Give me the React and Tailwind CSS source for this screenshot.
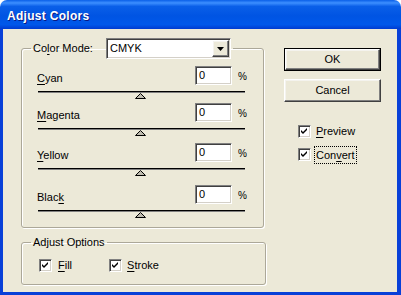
import React from 'react';

const sunken =
    'border border-t-[#808080] border-l-[#808080] border-b-white border-r-white shadow-[inset_1px_1px_0_#404040,inset_-1px_-1px_0_#d4d0c8]';
const raised =
    'border border-t-white border-l-white border-b-[#404040] border-r-[#404040] shadow-[inset_-1px_-1px_0_#808080,inset_1px_1px_0_#f4f3ee]';
const etched = 'border border-[#aca899] rounded-[3px] shadow-[inset_1px_1px_0_#fff,1px_1px_0_#fff]';

const Key = ({ children }) => <span className="underline underline-offset-[2px]">{children}</span>;

const Checkbox = () => (
    <div className={`w-[13px] h-[13px] bg-white flex items-center justify-center ${sunken}`}>
        <svg width="7" height="7" viewBox="0 0 7 7">
            <path d="M0 2 L2 4 L6 0 L6 2 L2 6 L0 4 Z" fill="#000" />
        </svg>
    </div>
);

const ColorRow = ({ label, className }) => (
    <div className={className}>
        <div className="flex items-center h-[19px]">
            <span className="flex-1 -ml-[1px] pt-[5px]">{label}</span>
            <div className={`w-[37px] h-[19px] bg-white pl-[3px] leading-[17px] ${sunken}`}>0</div>
            <span className="ml-[6px] w-[7px] text-[10px] pt-[1px]">%</span>
        </div>
        <div className="mt-[6px] h-[2px] bg-black border-b border-[#808080]" />
        <div className="flex justify-center pr-[2px]">
            <svg width="11" height="6" viewBox="0 0 11 6">
                <path d="M5.5 0.5 L10.5 5.5 L0.5 5.5 Z" fill="#c0bdb0" stroke="#000" strokeWidth="1" />
            </svg>
        </div>
    </div>
);

export default function App() {
    return (
        <div className="w-[401px] h-[295px] flex flex-col font-['Liberation_Sans',Arial,sans-serif] text-[11px] text-black select-none">
            <div className="h-[29px] shrink-0 rounded-t-[7px] bg-[linear-gradient(to_bottom,#0a5fe8_0%,#3d8fff_10%,#0a5fe8_22%,#0054e3_55%,#0058ea_85%,#003bd0_100%)] flex items-center pl-[7px] pt-[3px]">
                <span className="text-white font-bold text-[12px] tracking-[0.3px] [text-shadow:1px_1px_0_#0a1883]">
                    Adjust Colors
                </span>
            </div>
            <div className="flex-1 flex bg-[#ece9d8] border-l-[3px] border-r-[4px] border-b-[3px] border-[#0840d8]">
                <div className="w-[245px] ml-[18px] pt-[9px]">
                    <fieldset className={`w-[243px] pb-[9px] ${etched}`}>
                        <legend className="ml-[9px] px-[2px] flex items-center">
                            <span>
                                Co<Key>l</Key>or Mode:
                            </span>
                            <div className={`ml-[13px] w-[125px] h-[21px] bg-white flex items-center ${sunken}`}>
                                <span className="flex-1 pl-[3px]">CMYK</span>
                                <div className={`w-[17px] h-[17px] mr-[1px] bg-[#ece9d8] flex items-center justify-center ${raised}`}>
                                    <svg width="7" height="4" viewBox="0 0 7 4">
                                        <path d="M0 0 H7 L3.5 4 Z" fill="#000" />
                                    </svg>
                                </div>
                            </div>
                        </legend>
                        <div className="pl-[16px] pr-[18px]">
                            <ColorRow className="mt-[7px]" label={<><Key>C</Key>yan</>} />
                            <ColorRow className="mt-[4px]" label={<><Key>M</Key>agenta</>} />
                            <ColorRow className="mt-[7px]" label={<><Key>Y</Key>ellow</>} />
                            <ColorRow className="mt-[9px]" label={<>Blac<Key>k</Key></>} />
                        </div>
                    </fieldset>
                    <fieldset className={`mt-[7px] w-[245px] pb-[10px] ${etched}`}>
                        <legend className="ml-[9px] px-[2px] leading-[14px]">Adjust Options</legend>
                        <div className="mt-[8px] pl-[17px] flex items-center">
                            <Checkbox />
                            <span className="ml-[6px]"><Key>F</Key>ill</span>
                            <div className="ml-[37px]"><Checkbox /></div>
                            <span className="ml-[5px]"><Key>S</Key>troke</span>
                        </div>
                    </fieldset>
                </div>
                <div className="ml-[18px] pt-[19px] flex flex-col">
                    <div className="w-[97px] h-[23px] border border-black">
                        <div className={`w-full h-full bg-[#ece9d8] flex items-center justify-center ${raised}`}>OK</div>
                    </div>
                    <div className={`mt-[8px] w-[97px] h-[23px] bg-[#ece9d8] flex items-center justify-center ${raised}`}>
                        Cancel
                    </div>
                    <div className="mt-[21px] ml-[14px] flex items-center">
                        <Checkbox />
                        <span className="ml-[5px]"><Key>P</Key>review</span>
                    </div>
                    <div className="mt-[7px] ml-[14px] flex items-center">
                        <Checkbox />
                        <span className="ml-[4px] px-[1px] outline-dotted outline-1 outline-black">
                            Con<Key>v</Key>ert
                        </span>
                    </div>
                </div>
            </div>
        </div>
    );
}
